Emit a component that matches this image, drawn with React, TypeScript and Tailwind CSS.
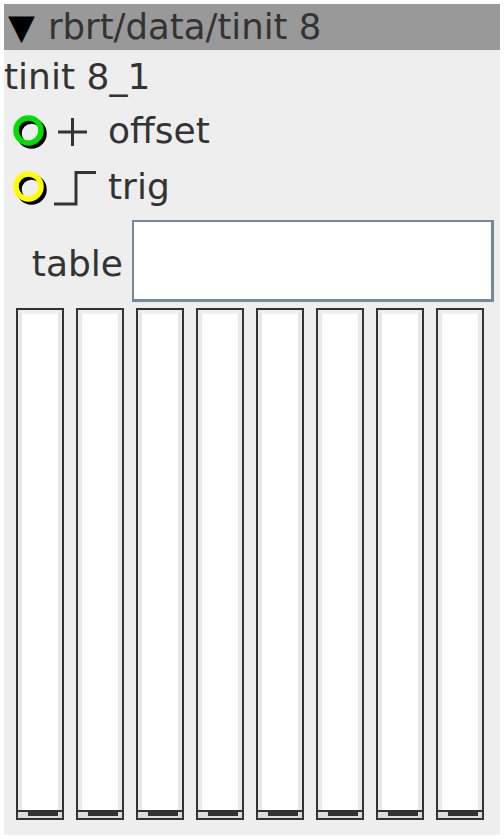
import React from "react"

function Ring({ color }: { color: string }) {
    return (
        <svg width="36" height="36" viewBox="0 0 36 36">
            <circle cx="18.5" cy="18.5" r="12.5" fill="none" stroke="#000" strokeWidth="5.5" />
            <circle cx="15.5" cy="15.5" r="12.5" fill="none" stroke={color} strokeWidth="5.5" />
        </svg>
    )
}

function Slider() {
    return (
        <div className="flex h-[512px] w-[48px] flex-col border-2 border-[#333]">
            <div className="flex-1 border-x-4 border-t-4 border-x-[#e8e8e8] border-t-[#efefef] bg-white" />
            <div className="h-[2px] bg-[#333]" />
            <div className="flex h-[4px] bg-[#dcdcdc]">
                <div className="ml-[10px] mr-[4px] flex-1 bg-[#333]" />
            </div>
            <div className="h-[2px] bg-[#dcdcdc]" />
        </div>
    )
}

export default function App() {
    const sliders = [0, 1, 2, 3, 4, 5, 6, 7]

    return (
        <div className="min-h-[840px] bg-white p-[4px] font-['DejaVu_Sans',sans-serif] text-[#333]">
            <div className="flex h-[831px] w-[496px] flex-col bg-[#eeeeee]">
                {/* header */}
                <div className="flex h-[46px] items-center bg-[#999999] pl-[4px] text-[35px] leading-[46px]">
                    <span className="text-black">▼</span>
                    <span className="ml-[13px] text-[35.5px]">rbrt/data/tinit 8</span>
                </div>

                <div className="h-[53px] text-[36px] leading-[53px]">tinit 8_1</div>

                {/* inlets */}
                <div className="flex h-[56px] items-center pl-[9px] pt-[4px]">
                    <Ring color="#00dd00" />
                    <svg className="ml-[7px]" width="34" height="34" viewBox="0 0 34 34">
                        <path d="M2 16H31M16.5 2V30" stroke="#333" strokeWidth="3" fill="none" />
                    </svg>
                    <span className="ml-[18px] mt-[-4px] text-[36px] leading-[56px]">offset</span>
                </div>
                <div className="flex h-[56px] items-center pl-[9px] pt-[4px]">
                    <Ring color="#ffff00" />
                    <svg className="ml-[5px] mt-[-3px]" width="44" height="38" viewBox="0 0 44 38">
                        <path d="M0 35H22V3.5H42" stroke="#333" strokeWidth="3" fill="none" />
                    </svg>
                    <span className="ml-[10px] mt-[-4px] text-[36px] leading-[56px]">trig</span>
                </div>

                {/* table */}
                <div className="mt-[5px] flex h-[82px] items-start">
                    <div className="mt-[23px] w-[128px] pr-[9px] text-right text-[36px] leading-[41px]">table</div>
                    <div className="h-[82px] w-[362px] border-2 border-r-[3px] border-b-[3px] border-[#778899] bg-white" />
                </div>

                {/* sliders */}
                <div className="mt-[6px] flex gap-[12px] pl-[12px]">
                    {sliders.map((i) => (
                        <Slider key={i} />
                    ))}
                </div>
            </div>
        </div>
    )
}
